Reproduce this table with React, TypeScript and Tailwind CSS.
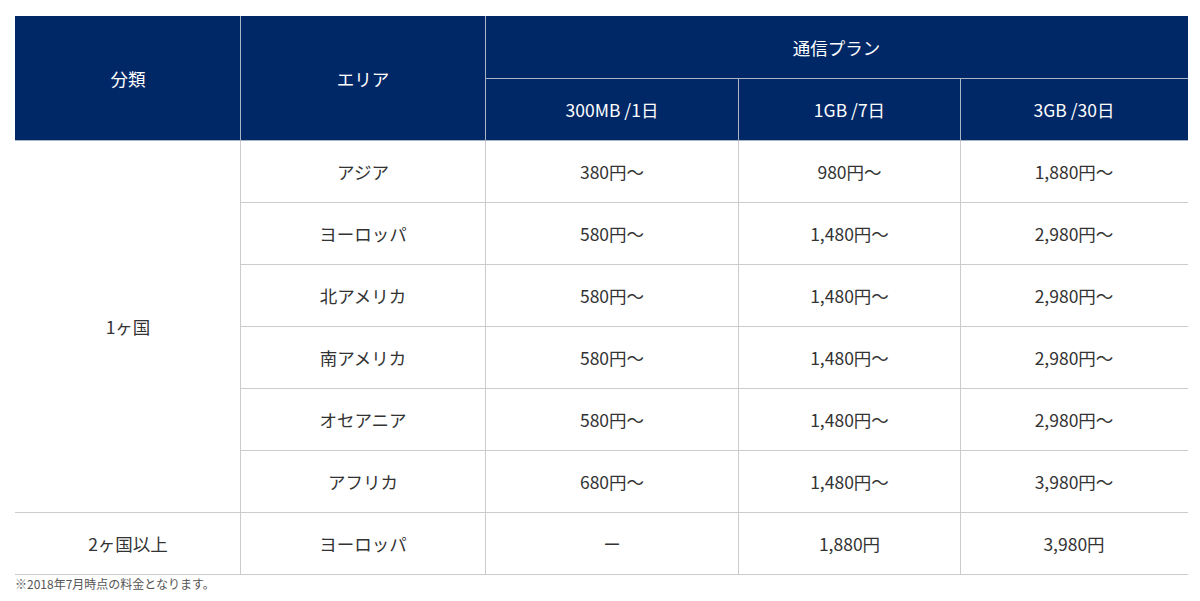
const rows = [
  ["アジア", "380円〜", "980円〜", "1,880円〜"],
  ["ヨーロッパ", "580円〜", "1,480円〜", "2,980円〜"],
  ["北アメリカ", "580円〜", "1,480円〜", "2,980円〜"],
  ["南アメリカ", "580円〜", "1,480円〜", "2,980円〜"],
  ["オセアニア", "580円〜", "1,480円〜", "2,980円〜"],
  ["アフリカ", "680円〜", "1,480円〜", "3,980円〜"],
]

const font = { fontFamily: '"Noto Sans CJK JP", "Noto Sans", sans-serif' }

export default function App() {
  const th = "bg-[#012866] text-white font-normal text-[17.5px] leading-none text-center align-middle border border-[#aab4c6] h-[62px]"
  const td = "text-center align-middle text-[17.5px] leading-none text-[#333] h-[62px] border-t border-t-[#cccccc] border-b border-b-[#cccccc] border-l border-l-[#cccccc] border-l-dotted border-r border-r-[#cccccc] border-r-dotted"
  return (
    <div className="bg-white w-[1200px] h-[601px] pt-[16px] px-[15px]" style={font}>
      <table className="w-[1172px] border-collapse table-fixed">
        <colgroup>
          <col className="w-[225px]" />
          <col className="w-[245px]" />
          <col className="w-[253px]" />
          <col className="w-[222px]" />
          <col className="w-[227px]" />
        </colgroup>
        <thead>
          <tr>
            <th rowSpan={2} className={th + " border-l-[#012866] border-t-[#012866]"}>分類</th>
            <th rowSpan={2} className={th + " border-t-[#012866]"}>エリア</th>
            <th colSpan={3} className={th + " border-r-[#012866] border-t-[#012866]"}>通信プラン</th>
          </tr>
          <tr>
            <th className={th}>300MB /1日</th>
            <th className={th}>1GB /7日</th>
            <th className={th + " border-r-[#012866]"}>3GB /30日</th>
          </tr>
        </thead>
        <tbody>
          {rows.map((r, i) => (
            <tr key={i}>
              {i === 0 && (
                <td rowSpan={6} className={td + " border-l-white"}>1ヶ国</td>
              )}
              {r.map((c, j) => (
                <td key={j} className={td + (j === 3 ? " border-r-white" : "")}>{c}</td>
              ))}
            </tr>
          ))}
          <tr>
            <td className={td + " border-l-white"}>2ヶ国以上</td>
            <td className={td}>ヨーロッパ</td>
            <td className={td}>ー</td>
            <td className={td}>1,880円</td>
            <td className={td + " border-r-white"}>3,980円</td>
          </tr>
        </tbody>
      </table>
      <p className="text-[12px] leading-[16px] text-[#555] mt-[1px]">※2018年7月時点の料金となります。</p>
    </div>
  )
}
